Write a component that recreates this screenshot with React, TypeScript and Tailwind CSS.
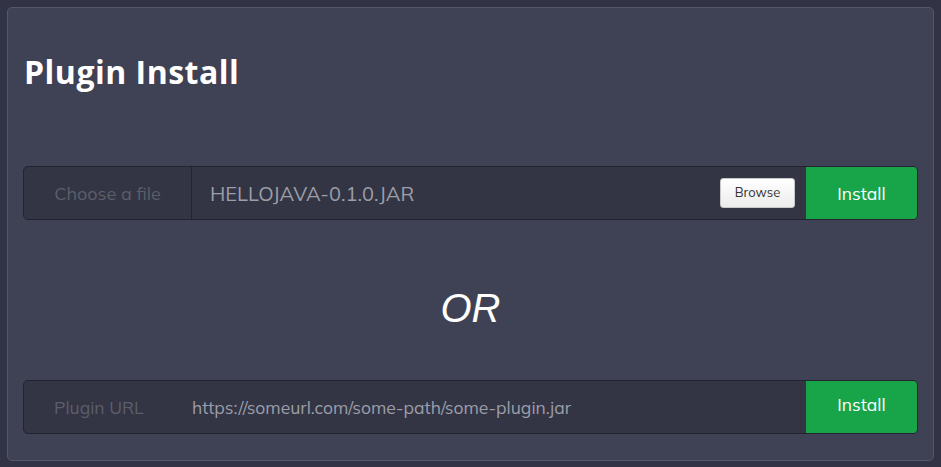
import React from "react";

const App: React.FC = () => {
  return (
    <div className="min-h-screen w-full bg-[#323446] p-[7px] font-['Mulish','Lato',sans-serif]">
      <div className="rounded-[5px] border border-[#55586c] bg-[#3f4154] px-[15px] pt-[44px] pb-[26px]">
        <h1 className="pl-[1px] text-[32px] leading-[40px] font-bold tracking-[0.5px] text-white font-['Open_Sans',sans-serif]">
          Plugin Install
        </h1>

        {/* upload a jar */}
        <div className="mt-[74px] flex h-[54px] overflow-hidden rounded-[5px] border border-[#23242f] bg-[#333545]">
          <div className="flex w-[168px] shrink-0 items-center justify-center border-r border-[#23242f] pt-[1px] text-[18px] text-[#5c5e6a]">
            Choose a file
          </div>
          <div className="flex flex-1 items-center justify-between pl-[18px] pr-[11px]">
            <span className="pt-[1px] text-[20px] text-[#9c9ea8]">HELLOJAVA-0.1.0.JAR</span>
            <button className="h-[30px] w-[75px] rounded-[3px] border border-[#c8c8c8] bg-gradient-to-b from-white to-[#ececec] text-[13px] text-[#333]">
              Browse
            </button>
          </div>
          <button className="w-[111px] shrink-0 bg-[#18a54a] pt-[1px] text-[17.5px] text-white">Install</button>
        </div>

        <div className="mt-[64px] mb-[48px] text-center text-[40px] leading-[48px] italic text-white font-['Liberation_Sans',sans-serif]">
          OR
        </div>

        {/* install from url */}
        <div className="flex h-[54px] overflow-hidden rounded-[5px] border border-[#23242f] bg-[#333545]">
          <div className="flex w-[168px] shrink-0 items-center pl-[30px] text-[17.5px] text-[#5c5e6a]">
            Plugin URL
          </div>
          <div className="flex flex-1 items-center text-[17.5px] text-[#9c9ea8]">
            https://someurl.com/some-path/some-plugin.jar
          </div>
          <button className="w-[111px] shrink-0 bg-[#18a54a] pb-[5px] text-[17.5px] text-white">Install</button>
        </div>
      </div>
    </div>
  );
};

export default App;
